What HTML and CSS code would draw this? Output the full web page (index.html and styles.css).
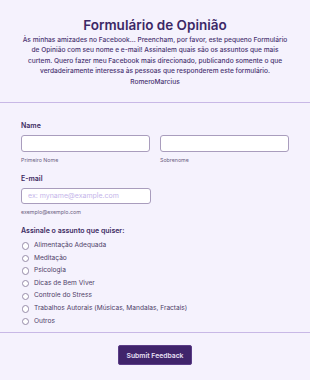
FILE: index.html
```html
<!DOCTYPE html>
<html lang="pt">

<head>
  <meta charset="UTF-8" />
  <title>Formulário de Opinião</title>
  <link rel="stylesheet" href="styles.css">
</head>

<body>
  <div class="header">
    <h1 class="title">Formulário de Opinião</h1>
    <p class="intro">Às minhas amizades no Facebook... Preencham, por favor, este pequeno Formulário de Opinião com seu nome e e-mail! Assinalem quais são os assuntos que mais curtem. Quero fazer meu Facebook mais direcionado, publicando somente o que verdadeiramente interessa às pessoas que responderem este formulário.<br>RomeroMarcius</p>
  </div>

  <form class="form">
    <div class="field">
      <div class="label">Name</div>
      <div class="name-row">
        <div>
          <input class="input" type="text">
          <div class="sublabel">Primeiro Nome</div>
        </div>
        <div>
          <input class="input" type="text">
          <div class="sublabel">Sobrenome</div>
        </div>
      </div>
    </div>

    <div class="field">
      <div class="label">E-mail</div>
      <input class="input email" type="text" placeholder="ex: myname@example.com">
      <div class="sublabel">exemplo@exemplo.com</div>
    </div>

    <div class="field">
      <div class="label">Assinale o assunto que quiser:</div>
      <div class="options">
        <label class="option"><span class="radio"></span>Alimentação Adequada</label>
        <label class="option"><span class="radio"></span>Meditação</label>
        <label class="option"><span class="radio"></span>Psicologia</label>
        <label class="option"><span class="radio"></span>Dicas de Bem Viver</label>
        <label class="option"><span class="radio"></span>Controle do Stress</label>
        <label class="option"><span class="radio"></span>Trabalhos Autorais (Músicas, Mandalas, Fractais)</label>
        <label class="option"><span class="radio"></span>Outros</label>
      </div>
    </div>
  </form>

  <div class="footer">
    <button class="button" type="button">Submit Feedback</button>
  </div>
</body>

</html>
```

FILE: styles.css
```css
body {
  margin: 0;
  background-color: #f5f2fd;
  font-family: Inter, "Noto Sans", sans-serif;
  color: #3c2a62;
}

.header {
  text-align: center;
  padding: 15px 20px 15px;
  border-bottom: 1px solid #c8b8e6;
}

.title {
  margin: 0;
  font-size: 13.5px;
  font-weight: 600;
  line-height: 20px;
  color: #3b2866;
}

.intro {
  margin: 0;
  font-size: 6.6px;
  font-weight: 500;
  line-height: 10.4px;
  color: #4a3472;
}

.form {
  padding: 18px 21px 6px;
  border-bottom: 1px solid #c8b8e6;
}

.field {
  margin-bottom: 10px;
}

.field:last-child {
  margin-bottom: 0;
}

.label {
  font-size: 7px;
  font-weight: 600;
  line-height: 10px;
  margin-bottom: 4px;
  color: #3c2a62;
}

.name-row {
  display: grid;
  grid-template-columns: 1fr 1fr;
  gap: 10px;
}

.input {
  display: block;
  box-sizing: border-box;
  width: 100%;
  height: 16.5px;
  margin: 0;
  padding: 0 6px;
  background: #fff;
  border: 1px solid #a99dbd;
  border-radius: 3px;
  font-family: Inter, "Noto Sans", sans-serif;
  font-size: 7px;
}

.input.email {
  width: 130px;
}

.input::placeholder {
  color: #c5b6ea;
}

.sublabel {
  font-size: 5.3px;
  line-height: 8px;
  margin-top: 4px;
  color: #6b6080;
}

.options {
  display: flex;
  flex-direction: column;
  gap: 2.8px;
  padding-top: 1px;
}

.option {
  display: flex;
  align-items: center;
  gap: 5px;
  font-size: 6.6px;
  line-height: 9.8px;
  color: #4e4068;
}

.radio {
  width: 7.5px;
  height: 7.5px;
  box-sizing: border-box;
  border: 1px solid #978ca9;
  border-radius: 50%;
  background: #fff;
  margin-left: 0.5px;
}

.footer {
  display: flex;
  justify-content: center;
  padding-top: 12px;
}

.button {
  width: 74px;
  height: 19.5px;
  padding: 0;
  background: #40246b;
  border: 1px solid #5b3d87;
  border-radius: 2px;
  color: #e8e0f5;
  font-family: Inter, "Noto Sans", sans-serif;
  font-size: 6.8px;
  font-weight: 600;
  cursor: pointer;
}
```
